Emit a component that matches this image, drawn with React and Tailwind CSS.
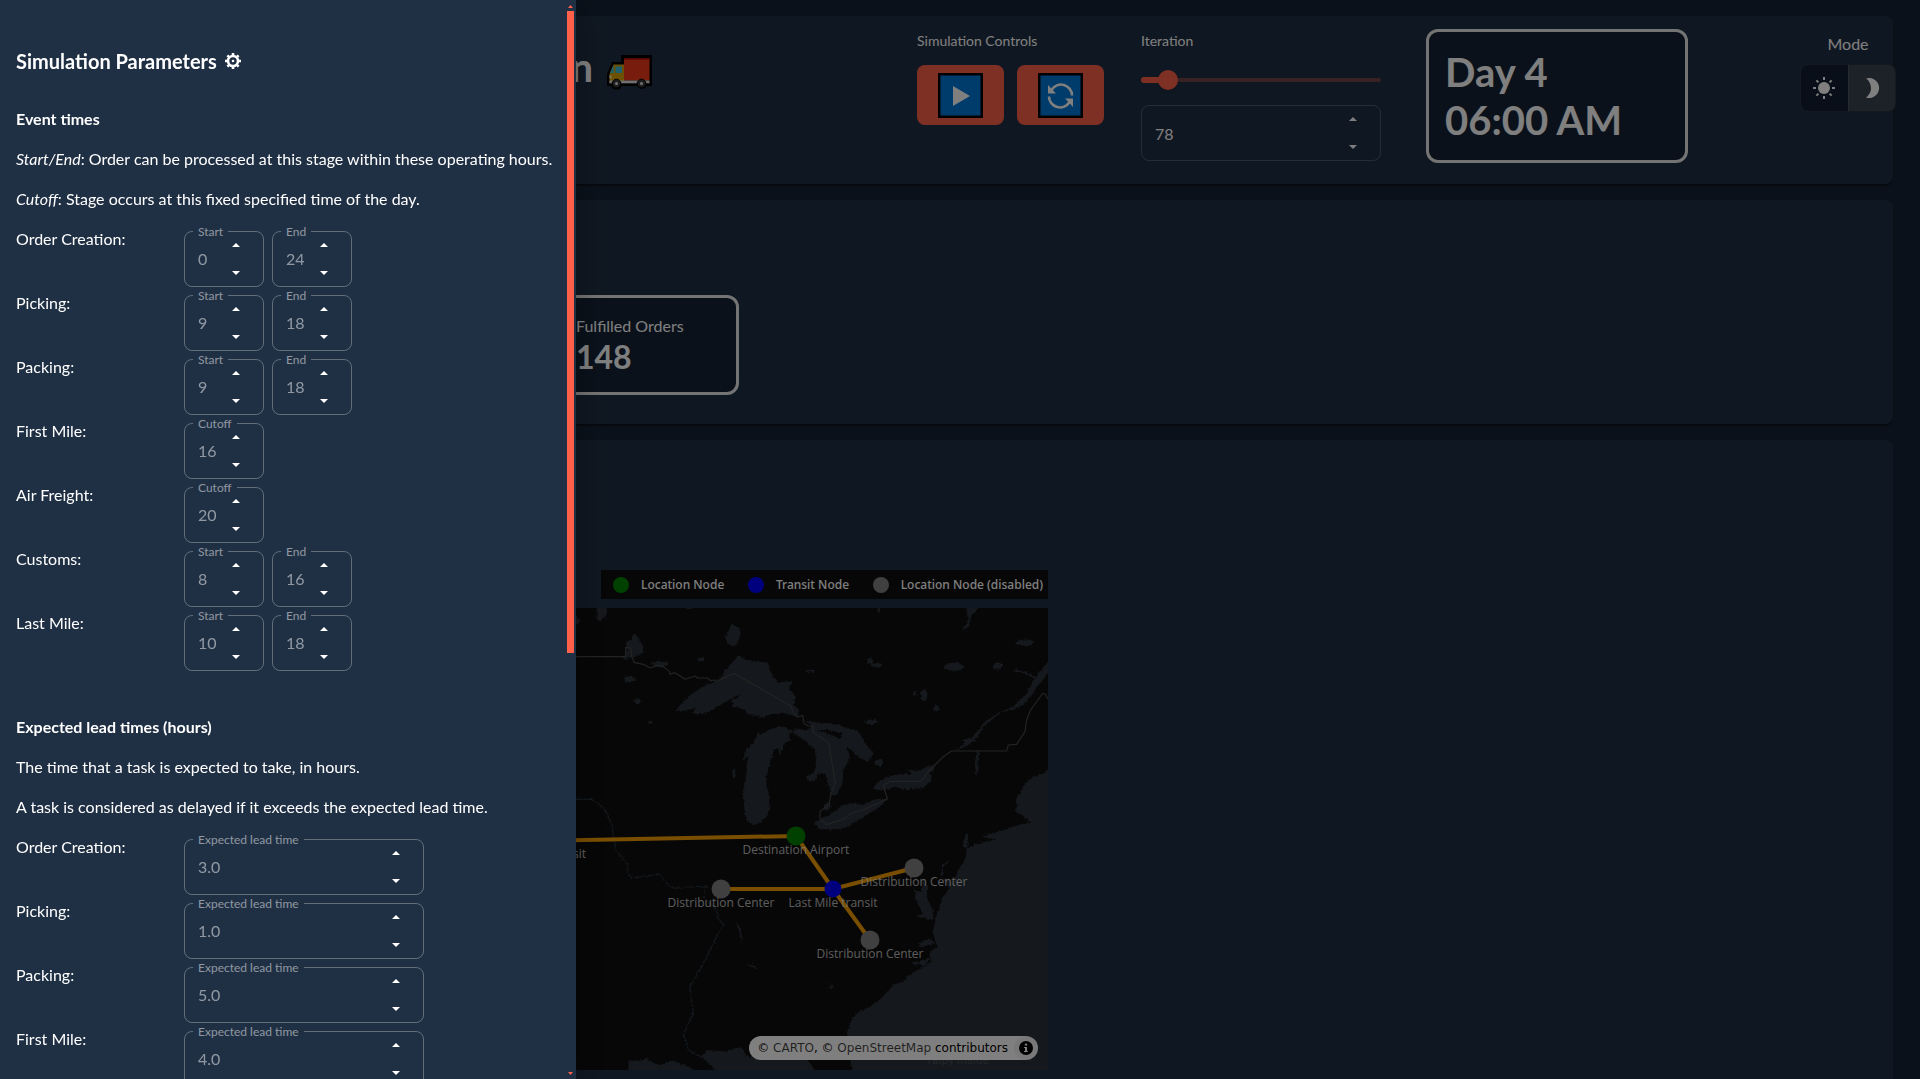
import React from "react";

const eventTimes = [
  { name: "Order Creation", fields: [["Start", "0"], ["End", "24"]] },
  { name: "Picking", fields: [["Start", "9"], ["End", "18"]] },
  { name: "Packing", fields: [["Start", "9"], ["End", "18"]] },
  { name: "First Mile", fields: [["Cutoff", "16"]] },
  { name: "Air Freight", fields: [["Cutoff", "20"]] },
  { name: "Customs", fields: [["Start", "8"], ["End", "16"]] },
  { name: "Last Mile", fields: [["Start", "10"], ["End", "18"]] },
];

const leadTimes = [
  { name: "Order Creation", value: "3.0" },
  { name: "Picking", value: "1.0" },
  { name: "Packing", value: "5.0" },
  { name: "First Mile", value: "4.0" },
];

const smallLakes = [
  [210, 388, 18, 9], [232, 452, 9, 7], [270, 517, 7, 7], [423, 328, 10, 6], [300, 342, 26, 8],
  [752, 363, 14, 4], [930, 334, 9, 9], [950, 345, 18, 6], [1183, 350, 28, 12], [1313, 348, 14, 11],
  [1395, 278, 26, 10], [1092, 435, 10, 18], [1065, 430, 6, 8], [1130, 475, 9, 9], [935, 516, 22, 7],
  [957, 638, 12, 11], [522, 670, 5, 14], [388, 174, 10, 3], [957, 180, 4, 8], [802, 770, 11, 11],
];

function Arrow({ up }) {
  return (
    <svg viewBox="0 0 8 4" className="h-1 w-2 fill-current" aria-hidden="true">
      <path d={up ? "M0 4 L4 0 L8 4Z" : "M0 0 L8 0 L4 4Z"} />
    </svg>
  );
}

function NumberField({ id, label, value, width, tone }) {
  return (
    <div className={`relative flex h-14 rounded-lg border ${width} ${tone}`}>
      {label && (
        <label htmlFor={id} className="absolute -top-2 left-2 bg-[#1f2f44] px-[5px] text-xs text-white/50">
          {label}
        </label>
      )}
      <input
        id={id}
        defaultValue={value}
        aria-label={label ? undefined : "Iteration value"}
        inputMode="decimal"
        className={`w-0 min-w-0 flex-1 bg-transparent pl-[13px] outline-none ${label ? "" : "pt-0.5"}`}
      />
      <div className="-my-px mr-[11px] flex w-8 flex-col text-white">
        <button aria-label="Increase" className="flex h-7 items-center justify-center"><Arrow up /></button>
        <button aria-label="Decrease" className="flex h-7 items-center justify-center"><Arrow /></button>
      </div>
    </div>
  );
}

function Gear() {
  return (
    <svg viewBox="0 0 16 16" className="size-4" fill="none" stroke="currentColor" aria-hidden="true">
      <circle cx="8" cy="8" r="5" strokeWidth="2.6" />
      <circle cx="8" cy="8" r="1.3" fill="currentColor" stroke="none" />
      <path strokeWidth="2.6" d="M8 0v2.5M8 13.5V16M0 8h2.5M13.500 8H16M2.400 2.400l1.700 1.700M11.900 11.900l1.700 1.700M2.400 13.600l1.700-1.700M11.900 4.100l1.700-1.700" />
    </svg>
  );
}

function Truck() {
  return (
    <svg viewBox="0 0 45 36" className="h-9 w-[45px]" aria-hidden="true">
      <path d="M14 0H45V31H40A6 6 0 0 1 30 31H15A6 6 0 0 1 4 31H0V19L5 7H14Z" fill="#000" />
      <path d="M2.500 19 6.500 9.500H17V28H2.500Z" fill="#d9a300" />
      <path d="M3 18 6.200 11H6.800V18Z M8.500 11.500H15V18H8.500Z" fill="#3fc0dc" />
      <rect x="2.500" y="20.500" width="2" height="3" fill="#fff" opacity=".8" />
      <rect x="17" y="3" width="25.500" height="22.500" fill="#f0391a" />
      <rect x="17" y="3" width="25.500" height="1.500" fill="#a30b00" />
      <rect x="2.500" y="25.500" width="40" height="2.800" fill="#e0e0e0" />
      <path d="M4 28A6 6 0 0 1 15 28Z M29 28A6 6 0 0 1 40 28Z" fill="#c8c8c8" />
      <circle cx="9.500" cy="28.500" r="4.300" fill="#3a3a3a" stroke="#000" strokeWidth="1" />
      <circle cx="34.500" cy="28.500" r="4.300" fill="#3a3a3a" stroke="#000" strokeWidth="1" />
      <circle cx="9.500" cy="28.500" r="1.500" fill="#e8e8e8" />
      <circle cx="34.500" cy="28.500" r="1.500" fill="#e8e8e8" />
    </svg>
  );
}

function PlayIcon() {
  return (
    <svg viewBox="0 0 45 45" className="size-[45px]" aria-hidden="true">
      <rect width="45" height="45" fill="#000" />
      <rect x="2.500" y="2.500" width="40" height="40" fill="#0078d7" />
      <path d="M15 13V33L32 23Z" fill="#fff" />
    </svg>
  );
}

function RefreshIcon() {
  return (
    <svg viewBox="0 0 45 45" className="size-[45px]" aria-hidden="true">
      <rect width="45" height="45" fill="#000" />
      <rect x="2.500" y="2.500" width="40" height="40" fill="#0078d7" />
      <path d="M13.500 17A11 11 0 0 1 34 22.500M31.500 29A11 11 0 0 1 11 23.500" fill="none" stroke="#fff" strokeWidth="2.600" />
      <path d="M10 12V20.500H18Z M35 34V25.500H27Z" fill="#fff" />
    </svg>
  );
}

function Header() {
  return (
    <header className="flex h-42 rounded-lg bg-[#1f2f44] pl-4 shadow-[0_2px_2px_rgba(0,0,0,0.4)]">
      <div className="flex-1">
        <h1 className="mt-[27px] flex w-[609px] items-end justify-end gap-3.5 text-[40px] leading-12 font-bold whitespace-nowrap">
          Logistics Simulation <Truck />
        </h1>
      </div>
      <section className="w-56 pt-[15px]">
        <h2 className="text-sm">Simulation Controls</h2>
        <div className="mt-3.5 flex gap-[13px]">
          <button aria-label="Play" className="flex h-15 w-[87px] items-center justify-center rounded-lg bg-[#ff6049]"><PlayIcon /></button>
          <button aria-label="Restart" className="flex h-15 w-[87px] items-center justify-center rounded-lg bg-[#ff6049]"><RefreshIcon /></button>
        </div>
      </section>
      <section className="mr-[45px] w-60 pt-[15px]">
        <label htmlFor="iteration" className="block text-sm">Iteration</label>
        <div className="relative mt-[19px] mb-[15px] flex h-5 items-center">
          <span className="absolute h-1 w-full rounded-full bg-[#ff6049]/38" />
          <span className="absolute h-1.5 w-[11%] rounded-full bg-[#ff6049]" />
          <input
            id="iteration"
            type="range"
            min="0"
            max="1000"
            defaultValue="78"
            className="relative h-5 w-full appearance-none bg-transparent [&::-webkit-slider-thumb]:size-5 [&::-webkit-slider-thumb]:appearance-none [&::-webkit-slider-thumb]:rounded-full [&::-webkit-slider-thumb]:bg-[#ff6049] [&::-webkit-slider-thumb]:shadow-md"
          />
        </div>
        <NumberField id="iteration-value" value="78" width="w-full" tone="border-white/20 text-white" />
      </section>
      <section className="mt-[13px] h-[134px] w-[262px] rounded-xl border-3 border-[#e8e8e8] bg-[#152335] px-4 py-4 text-[40px] leading-12 font-bold">
        <p>Day 4</p>
        <p>06:00 AM</p>
      </section>
      <section className="-mr-[3px] ml-28 flex w-24 flex-col items-center pt-4">
        <h2>Mode</h2>
        <div className="mt-2 flex h-12 w-full overflow-hidden rounded-lg border border-white/10 bg-[#131f30]">
          <button aria-label="Light mode" className="flex flex-1 items-center justify-center">
            <svg viewBox="0 0 24 24" className="size-6" aria-hidden="true">
              <circle cx="12" cy="12" r="6" fill="#fff" />
              <path stroke="#fff" strokeWidth="2" d="M12 1v3M12 20v3M1 12h3M20 12h3M4.400 4.400l2 2M17.600 17.600l2 2M4.400 19.600l2-2M17.600 6.400l2-2" />
            </svg>
          </button>
          <button aria-label="Dark mode" aria-pressed="true" className="flex flex-1 items-center justify-center border-l border-white/10 bg-[#3a4450]">
            <svg viewBox="0 0 24 24" className="size-6" aria-hidden="true">
              <path fill="#fff" d="M6 2.500A10 10 0 1 1 6 21.500A11.500 11.500 0 0 0 6 2.500Z" />
            </svg>
          </button>
        </div>
      </section>
    </header>
  );
}

function LegendItem({ dot, children }) {
  return (
    <li className="flex items-center gap-3">
      <span className={`size-4 rounded-full ${dot}`} />
      {children}
    </li>
  );
}

function NetworkMap() {
  return (
    <figure className="relative mt-[9px] h-[462px] bg-[#0e0e0e]">
      <svg viewBox="0 0 1005 462" preserveAspectRatio="xMaxYMin slice" className="block h-full w-full" role="img" aria-label="Delivery network">
        <defs>
          <filter id="coast" x="-5%" y="-5%" width="110%" height="110%" colorInterpolationFilters="sRGB">
            <feTurbulence type="fractalNoise" baseFrequency="0.12" numOctaves="2" seed="4" />
            <feDisplacementMap in="SourceGraphic" scale="12" xChannelSelector="R" yChannelSelector="G" />
          </filter>
        </defs>
        <g transform="translate(517 -58) scale(0.3333)">
          <g fill="#2b3038" filter="url(#coast)">
            <path d="M345 482 365 460 385 440 410 422 440 405 475 392 490 370 505 350 520 335 533 318 560 328 590 335 620 337 630 358 637 380 655 395 695 395 688 415 708 440 700 465 718 480 712 500 690 495 670 488 635 492 610 502 570 495 545 475 520 470 515 450 550 433 530 437 500 452 480 465 455 482 425 493 400 490 405 475 375 482Z" />
            <path d="M665 527 700 543 688 552 690 572 675 578 668 600 658 620 655 595 640 600 630 640 618 680 620 710 630 740 628 780 620 800 605 815 580 826 565 815 553 790 552 750 547 730 557 690 562 650 565 618 545 632 560 600 585 570 595 545 600 555 625 540Z" />
            <path d="M705 535 740 540 758 530 735 512 790 520 830 522 860 535 890 540 905 560 920 585 940 610 925 635 900 625 880 605 862 590 870 625 850 660 848 700 830 735 812 735 805 700 795 670 775 670 765 690 745 695 738 680 765 665 768 630 765 600 740 575 700 548Z" />
            <path d="M940 718 950 700 975 683 1010 673 1060 672 1040 660 1075 662 1100 650 1130 645 1110 670 1115 690 1090 715 1040 718 1000 712 970 722Z" />
            <path d="M778 810 815 790 845 768 870 760 910 765 945 748 985 745 960 770 900 808 850 835 810 841 775 835 762 820Z" />
            <path d="M1185 602 1215 580 1205 570 1235 565 1270 520 1310 492 1360 470 1400 430 1425 385 1464 335V370L1440 400 1400 455 1370 475 1320 490 1275 525 1245 572 1200 598Z M1250 600 1258 602 1255 650 1248 686 1245 640Z" />
            <path d="M1363 358 1400 366 1428 380 1425 386 1395 372 1363 364Z" />
            <path d="M1220 174H1255L1235 195 1228 225 1212 242 1208 238 1225 215Z M515 222 535 230 542 250 530 285 510 288 495 265Z M110 174H140V195L120 215 110 205Z M40 190 62 212 40 230Z" />
            <path d="M222 250 235 265 250 290 248 308 225 320 190 328 200 300 198 275 215 268Z" />
            {smallLakes.map(([cx, cy, rx, ry]) => <ellipse key={`${cx}-${cy}`} cx={cx} cy={cy} rx={rx} ry={ry} />)}
            <path d="M1480 640 1455 668 1420 680 1395 700 1370 745 1372 765 1366 785 1385 795 1413 818 1385 822 1340 838 1300 850 1265 860 1310 868 1245 882 1222 896 1215 930 1190 970 1170 1015 1150 1040 1128 1100 1118 1145 1132 1190 1108 1210 1115 1235 1090 1250 1075 1260 1040 1280 1030 1296 1000 1304 965 1345 930 1370 895 1388 875 1410 862 1445 868 1510 878 1575H1480Z" />
            <path d="M1218 850 1226 866 1222 894 1208 890Z M1170 932 1148 955 1150 985 1190 1000 1170 1018 1142 975 1146 945Z M1090 982 1105 1010 1100 1040 1118 1080 1122 1110 1094 1105 1064 1098 1090 1092 1068 1050 1062 1018 1085 1030Z M1075 1180 1110 1165 1125 1180 1080 1192Z M1050 1240 1110 1225 1095 1246Z" />
            <path d="M205 1575V1535L250 1530 265 1522 262 1532 300 1545 340 1532 395 1555V1575Z M475 1575 428 1520 440 1500 500 1505 545 1490 560 1520 740 1525 778 1575Z M528 1114 543 1140 547 1178 540 1160Z M558 1244 578 1243 596 1259 576 1250Z M803 1295 823 1312 805 1314 814 1309Z" />
          </g>
          <path d="M770 540 800 540 850 548 842 564 820 558 800 550Z" fill="#0e0e0e" filter="url(#coast)" />
          <g fill="none" strokeWidth="3.500" strokeLinejoin="round">
            <path stroke="#454745" d="M-1560 320H197V292L212 294 216 320 222 337 250 343 270 354 290 347 310 350 328 365 330 373 345 368 375 388 405 378 412 384 443 384 450 391 480 390 522 370 693 468 700 488 712 502 728 496 732 520 745 528 760 530 758 545 806 578 826 698 812 735 808 762 780 785 780 805 800 824 850 808 870 792 915 778 982 747 970 705 990 694H1083L1105 665 1150 620 1175 603H1340L1345 585 1370 583 1395 545 1400 510 1412 480 1448 430 1456 432 1464 448" />
            <path stroke="#27313a" filter="url(#coast)" d="M0 748H95L120 765 138 785 155 820 160 860 170 905 205 945 203 970 215 983 300 973 335 1015 440 1008 430 1040 470 1080 475 1105 490 1125 470 1160 440 1220 430 1240 390 1310 400 1390 370 1450 385 1500 430 1525 470 1560" />
          </g>
        </g>
        <g stroke="#ffa500" strokeWidth="4" strokeOpacity=".95">
          <path d="M120 240 753 228 790 281 827 332M678 281H790L871 260" fill="none" />
        </g>
        <g fill="#808080">
          <circle cx="678" cy="281" r="9.500" />
          <circle cx="871" cy="260" r="9.500" />
          <circle cx="827" cy="332" r="9.500" />
          <circle cx="753" cy="228" r="9.500" fill="#008000" />
          <circle cx="790" cy="281" r="8.500" fill="#0000ff" />
        </g>
        <g fill="#fff" fillOpacity=".72" fontFamily="'Open Sans', sans-serif" fontSize="12" textAnchor="middle">
          <text x="543" y="250" textAnchor="end">Air Freight transit</text>
          <text x="753" y="246">Destination Airport</text>
          <text x="678" y="299">Distribution Center</text>
          <text x="790" y="299">Last Mile transit</text>
          <text x="871" y="278">Distribution Center</text>
          <text x="827" y="350">Distribution Center</text>
        </g>
      </svg>
      <p className="absolute right-[59px] bottom-0.5 text-xs leading-4 text-white/15" style={{ fontFamily: "Roboto, sans-serif" }}>Taipy Inside</p>
      <figcaption className="absolute right-2.5 bottom-2.5 flex h-6 items-center gap-1.5 rounded-xl bg-white pl-2 text-xs whitespace-nowrap text-black" style={{ fontFamily: "'DejaVu Sans', sans-serif" }}>
        <span>
          © <a href="#carto" className="text-black/75">CARTO</a>, © <a href="#osm" className="text-black/75">OpenStreetMap</a> contributors
        </span>
        <button aria-label="Toggle attribution" className="flex size-6 items-center justify-center rounded-full bg-black/5">
          <svg viewBox="0 0 14 14" className="size-3.5" aria-hidden="true">
            <circle cx="7" cy="7" r="7" />
            <circle cx="7" cy="3.600" r="1.200" fill="#fff" />
            <path d="M5 6H8V10H9V11H5V10H6V7H5Z" fill="#fff" />
          </svg>
        </button>
      </figcaption>
    </figure>
  );
}

function Sidebar() {
  return (
    <aside className="fixed inset-y-0 left-0 flex w-[576px] max-w-full bg-[#1f2f44] text-white shadow-[0_8px_10px_-5px_rgba(0,0,0,0.2),0_16px_24px_2px_rgba(0,0,0,0.14),0_6px_30px_5px_rgba(0,0,0,0.12)]">
      <div className="min-w-0 flex-1 overflow-hidden pl-4">
        <h2 className="mt-[47px] flex h-7 items-center gap-2 text-xl font-bold">Simulation Parameters <Gear /></h2>
        <section className="mt-8">
          <h3 className="font-bold">Event times</h3>
          <p className="mt-4"><i>Start/End</i>: Order can be processed at this stage within these operating hours.</p>
          <p className="mt-4"><i>Cutoff</i>: Stage occurs at this fixed specified time of the day.</p>
          <div className="mt-4">
            {eventTimes.map(({ name, fields }) => (
              <div key={name} className="flex h-16">
                <p className="w-42">{name}:</p>
                <div className="mt-1 flex gap-2">
                  {fields.map(([label, value]) => (
                    <NumberField key={label} id={`${name}-${label}`} label={label} value={value} width="w-20" tone="border-white/30 text-white/50" />
                  ))}
                </div>
              </div>
            ))}
          </div>
        </section>
        <section className="mt-10">
          <h3 className="font-bold">Expected lead times (hours)</h3>
          <p className="mt-4">The time that a task is expected to take, in hours.</p>
          <p className="mt-4">A task is considered as delayed if it exceeds the expected lead time.</p>
          <div className="mt-4">
            {leadTimes.map(({ name, value }) => (
              <div key={name} className="flex h-16">
                <p className="w-42">{name}:</p>
                <div className="mt-1">
                  <NumberField id={`${name}-lead`} label="Expected lead time" value={value} width="w-60" tone="border-white/30 text-white/50" />
                </div>
              </div>
            ))}
          </div>
        </section>
      </div>
      <div className="mr-0.5 flex w-[7px] flex-col items-center text-[#ff6049]" aria-hidden="true">
        <svg viewBox="0 0 5 3" className="mt-[5px] mb-[3px] h-[3px] w-[5px] fill-current"><path d="M0 3 2.500 0 5 3Z" /></svg>
        <span className="w-full flex-[17] bg-[#ff6049]" />
        <span className="flex-[11]" />
        <svg viewBox="0 0 5 3" className="mt-1 mb-1 h-[3px] w-[5px] fill-current"><path d="M0 0H5L2.500 3Z" /></svg>
      </div>
    </aside>
  );
}

export default function App() {
  return (
    <div className="h-screen overflow-hidden bg-[#152335] text-base text-white" style={{ fontFamily: "Lato, sans-serif" }}>
      <main className="flex h-full flex-col gap-4 px-[27px] pt-4">
        <Header />
        <section className="h-56 shrink-0 rounded-lg bg-[#1f2f44] pt-[95px] pl-[530px] shadow-[0_2px_2px_rgba(0,0,0,0.4)]">
          <div className="h-25 w-[182px] rounded-xl border-3 border-[#e8e8e8] bg-[#152335] px-4 pt-4">
            <p>Fulfilled Orders</p>
            <p className="text-[32px] leading-[38px] font-bold">148</p>
          </div>
        </section>
        <section className="grid min-h-0 flex-1 grid-cols-[1005fr_829fr] rounded-t-lg bg-[#1f2f44] px-4 pt-[130px]">
          <div>
            <ul className="ml-auto flex h-[29px] w-[447px] items-center justify-between bg-[#0e0e0e] pr-[5px] pl-3 text-xs font-medium whitespace-nowrap" style={{ fontFamily: "'Noto Sans', sans-serif" }}>
              <LegendItem dot="bg-[#008000]">Location Node</LegendItem>
              <LegendItem dot="bg-[#0000ff]">Transit Node</LegendItem>
              <LegendItem dot="bg-[#808080]">Location Node (disabled)</LegendItem>
            </ul>
            <NetworkMap />
          </div>
        </section>
      </main>
      <div className="fixed inset-0 bg-black/50" />
      <Sidebar />
    </div>
  );
}
